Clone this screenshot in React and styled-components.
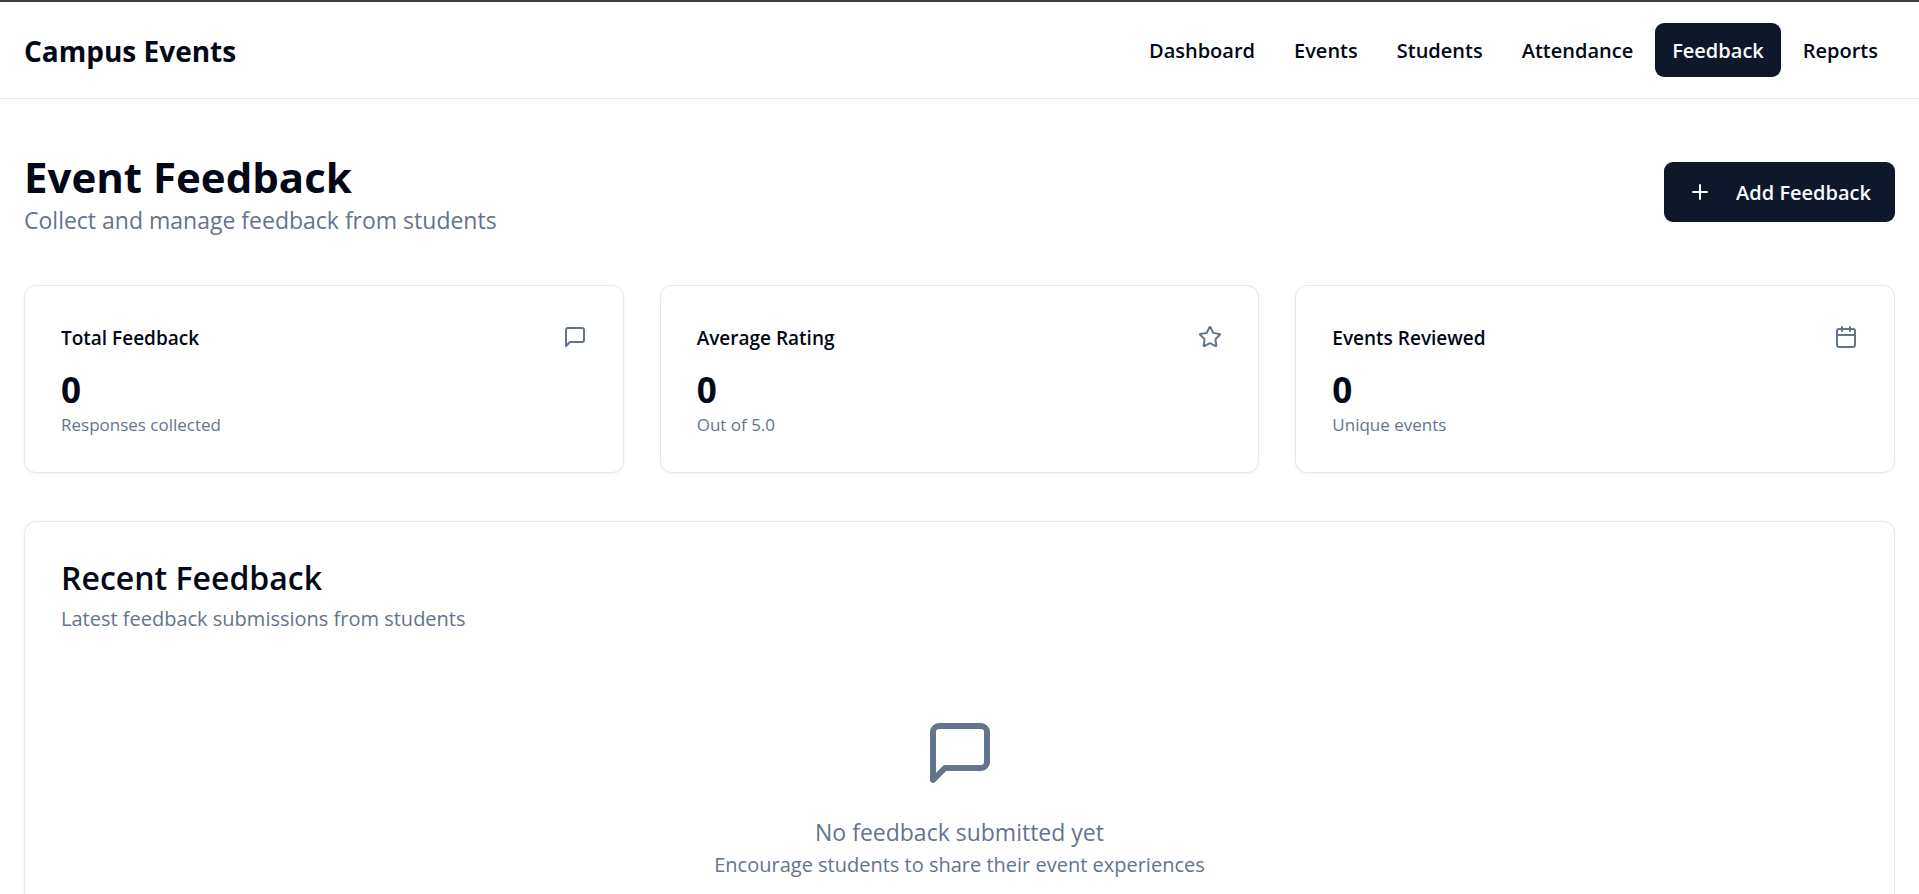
import React from "react";
import styled, { createGlobalStyle } from "styled-components";
import { Calendar, Plus, Star } from "lucide-react";

const GlobalStyle = createGlobalStyle`
  *, *::before, *::after { box-sizing: border-box; }
  body {
    margin: 0;
    background: #ffffff;
    color: #020817;
    font-family: "Segoe UI", "Open Sans", "Noto Sans", sans-serif;
    font-size: 23px;
    line-height: 36px;
  }
  h1, h2, h3, p { margin: 0; }
`;

const Header = styled.header`
  display: flex;
  align-items: center;
  justify-content: space-between;
  padding: 21px 24px;
  border-top: 2px solid #3f3d3e;
  border-bottom: 1px solid #e2e8f0;
`;

const Brand = styled.div`
  padding-top: 2px;
  font-size: 28px;
  font-weight: 700;
  line-height: 42px;
`;

const Nav = styled.nav`
  display: flex;
  gap: 5px;
`;

const NavLink = styled.a`
  padding: 13px 17px 11px;
  border-radius: 9px;
  font-size: 20px;
  font-weight: 600;
  line-height: 30px;
  text-decoration: none;
  white-space: nowrap;
  color: ${(p) => (p.$active ? "#f8fafc" : "#020817")};
  background: ${(p) => (p.$active ? "#0f172a" : "transparent")};
`;

const Main = styled.main`
  display: flex;
  flex-direction: column;
  gap: 48px;
  padding: 48px 24px;
`;

const PageHead = styled.div`
  display: flex;
  align-items: center;
  justify-content: space-between;
`;

const PageTitle = styled.h1`
  padding-top: 6px;
  font-size: 42px;
  font-weight: 700;
  line-height: 48px;
`;

const Muted = styled.p`
  padding-top: 2px;
  color: #64748b;
  line-height: 34px;
`;

const SmallMuted = styled(Muted)`
  font-size: 20px;
  line-height: 28px;
`;

const TinyMuted = styled(Muted)`
  font-size: 17px;
  line-height: 22px;
`;

const PrimaryButton = styled.button`
  display: inline-flex;
  align-items: center;
  gap: 24px;
  padding: 15px 24px;
  border: 0;
  border-radius: 9px;
  background: #0f172a;
  color: #f8fafc;
  font-family: inherit;
  font-size: 20px;
  font-weight: 600;
  line-height: 28px;
  white-space: nowrap;
  cursor: pointer;

  span { padding-top: 2px; }
`;

const Stats = styled.section`
  display: grid;
  grid-template-columns: repeat(3, 1fr);
  gap: 36px;
`;

const Card = styled.article`
  padding: 36px;
  border: 1px solid #e2e8f0;
  border-radius: 12px;
  background: #ffffff;
  box-shadow: 0 1px 3px rgba(0, 0, 0, 0.05);
`;

const StatHead = styled.div`
  display: flex;
  align-items: center;
  justify-content: space-between;
  margin-bottom: 12px;
  color: #64748b;
`;

const StatTitle = styled.h3`
  padding-top: 2px;
  color: #020817;
  font-size: 19px;
  font-weight: 600;
  line-height: 28px;
`;

const StatValue = styled.div`
  padding-top: 4px;
  font-size: 35px;
  font-weight: 700;
  line-height: 44px;
`;

const CardTitle = styled.h2`
  margin-bottom: 9px;
  padding-top: 4px;
  font-size: 32px;
  font-weight: 600;
  line-height: 32px;
`;

const Empty = styled.div`
  display: flex;
  flex-direction: column;
  align-items: center;
  padding: 84px 0 48px;
  text-align: center;
  color: #64748b;

  svg { margin-bottom: 24px; }
`;

function MessageIcon({ size }) {
  return (
    <svg
      width={size}
      height={size}
      viewBox="0 0 24 24"
      fill="none"
      stroke="currentColor"
      strokeWidth="2"
      strokeLinecap="round"
      strokeLinejoin="round"
      aria-hidden="true"
    >
      <path d="M21 15a2 2 0 0 1-2 2H7l-4 4V5a2 2 0 0 1 2-2h14a2 2 0 0 1 2 2z" />
    </svg>
  );
}

const links = ["Dashboard", "Events", "Students", "Attendance", "Feedback", "Reports"];

const stats = [
  { title: "Total Feedback", value: "0", note: "Responses collected", Icon: MessageIcon },
  { title: "Average Rating", value: "0", note: "Out of 5.0", Icon: Star },
  { title: "Events Reviewed", value: "0", note: "Unique events", Icon: Calendar },
];

export default function App() {
  return (
    <>
      <GlobalStyle />
      <Header>
        <Brand>Campus Events</Brand>
        <Nav>
          {links.map((name) => (
            <NavLink key={name} href={`#${name.toLowerCase()}`} $active={name === "Feedback"}>
              {name}
            </NavLink>
          ))}
        </Nav>
      </Header>
      <Main>
        <PageHead>
          <div>
            <PageTitle>Event Feedback</PageTitle>
            <Muted>Collect and manage feedback from students</Muted>
          </div>
          <PrimaryButton type="button">
            <Plus size={24} />
            <span>Add Feedback</span>
          </PrimaryButton>
        </PageHead>
        <Stats>
          {stats.map(({ title, value, note, Icon }) => (
            <Card key={title}>
              <StatHead>
                <StatTitle>{title}</StatTitle>
                <Icon size={24} />
              </StatHead>
              <StatValue>{value}</StatValue>
              <TinyMuted>{note}</TinyMuted>
            </Card>
          ))}
        </Stats>
        <Card as="section">
          <CardTitle>Recent Feedback</CardTitle>
          <SmallMuted>Latest feedback submissions from students</SmallMuted>
          <Empty>
            <MessageIcon size={72} />
            <Muted>No feedback submitted yet</Muted>
            <SmallMuted>Encourage students to share their event experiences</SmallMuted>
          </Empty>
        </Card>
      </Main>
    </>
  );
}
